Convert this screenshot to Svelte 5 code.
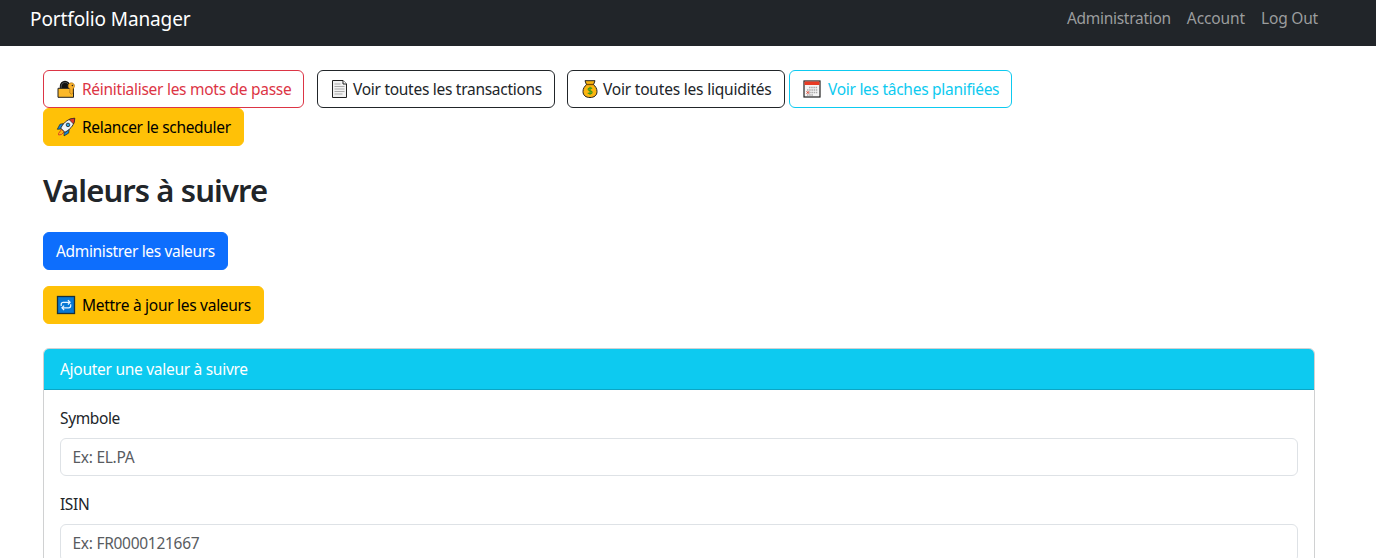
<script>
  const fields = [
    { id: 'symbole', label: 'Symbole', hint: 'Ex: EL.PA' },
    { id: 'isin', label: 'ISIN', hint: 'Ex: FR0000121667' }
  ];
</script>

<nav>
  <a class="brand" href="#home">Portfolio Manager</a>
  <div class="links">
    <a href="#administration">Administration</a>
    <a href="#account" class="account">Account</a>
    <a href="#logout" class="logout">Log Out</a>
  </div>
</nav>

<main>
  <div class="actions">
    <button class="btn danger w1">
      <svg viewBox="0 0 20 20">
        <path d="M3.800 10V7a5.200 5.200 0 0 1 10.400 0v3z" fill="#111" />
        <path d="M5.200 9V7a3.800 3.800 0 0 1 7.200-1.500" fill="none" stroke="#5a5f63" stroke-width=".8" />
        <path d="M2 9.300h15.500v9H2z" fill="#fbb829" stroke="#222" />
        <path d="M13.800 9.800a3.200 3.200 0 1 1 3.200-.1v4.200l-1.600 1.300-1.600-1.300z" fill="#f8b02c" stroke="#9b6815" stroke-width=".6" />
        <circle cx="16.400" cy="6.500" r=".8" fill="#222" />
      </svg><span>Réinitialiser les mots de passe</span>
    </button>
    <button class="btn dark w2">
      <svg viewBox="0 0 20 20">
        <path d="M2.500 1.500h10.500l3.500 3.500v13.500h-14z" fill="#f2f2f2" stroke="#222" />
        <path d="M13 1.500V5h3.500" fill="#fff" stroke="#222" />
        <path d="M4.500 5h6M4.500 7.500h10M4.500 10h10M4.500 12.500h10M4.500 15h8" stroke="#aaa" stroke-width="1" />
      </svg><span>Voir toutes les transactions</span>
    </button>
    <button class="btn dark w3">
      <svg viewBox="0 0 20 20">
        <path d="M6.700 5.500h6.600c2.400 2 3.700 4.200 3.700 7 0 4-3 6-7 6s-7-2-7-6c0-2.800 1.300-5 3.700-7z" fill="#fbb510" stroke="#222" />
        <path d="M5 1.700h10l-1.400 3.800H6.400z" fill="#fbb510" stroke="#222" />
        <path d="M6.500 5.500h7" stroke="#7a4b08" stroke-width="1.300" />
        <path d="M12 9.600c-.6-.8-3.900-1.100-3.900.7 0 1.900 4 1 4 3 0 1.800-3.400 1.600-4.300.5M10 7.800v8" fill="none" stroke="#3c9b17" stroke-width="1.200" />
      </svg><span>Voir toutes les liquidités</span>
    </button>
    <button class="btn info w4">
      <svg viewBox="0 0 20 20">
        <rect x="2" y="2" width="16" height="16" fill="#f5f5f5" stroke="#222" stroke-width="1.200" />
        <path d="M2.500 2.500h15V6h-15z" fill="#e83b24" />
        <path d="M7 8.500h8.500M5 11h10.500M5 13.500h10.500M5 16h6" stroke="#aaa" stroke-width="1.400" stroke-dasharray="1.500 .7" />
        <path d="M4.500 12.200l2.600 2.600M7.100 12.200l-2.600 2.600" stroke="#e83b24" stroke-width=".9" />
      </svg><span>Voir les tâches planifiées</span>
    </button>
    <button class="btn warning w5">
      <svg viewBox="0 0 20 20">
        <path d="M5.500 12.500L2.500 16.500l.2 1.500 2.800-.5 3-3z" fill="#fbb510" stroke="#d83820" stroke-width=".9" />
        <path d="M7.600 6.500L4 7.200 1.300 12.300l4-.4zM13.200 12.300l-.5 3.800-4.700 2.800.2-4z" fill="#1689d8" stroke="#222" stroke-width=".7" />
        <path d="M18.700 1.300c-5.600.2-10.400 3-14 9.800l4.200 4.200C15.800 11.500 18.500 6.900 18.700 1.300z" fill="#edf4f8" stroke="#222" stroke-width=".9" />
        <path d="M18.700 1.300c-2.300 0-4.100.4-5.700 1.200l4.500 4.500c.8-1.600 1.200-3.400 1.200-5.700z" fill="#df3827" stroke="#222" stroke-width=".6" />
        <circle cx="12" cy="7.900" r="1.800" fill="#29a9e8" stroke="#222" stroke-width=".8" />
      </svg><span>Relancer le scheduler</span>
    </button>
  </div>

  <h2>Valeurs à suivre</h2>

  <button class="btn primary w6"><span>Administrer les valeurs</span></button>
  <button class="btn warning update w7">
    <svg viewBox="0 0 20 20">
      <rect x="1.500" y="1.500" width="17" height="17" fill="#0878d4" stroke="#17303c" stroke-width="1.300" />
      <path d="M5.200 11V9.300c0-1.300.7-2 2-2H14M11.900 5.100l2.200 2.200-2.200 2.200M14.700 9.200v1.600c0 1.300-.7 2-2 2H6M8.100 10.600l-2.200 2.200L8.100 15" fill="none" stroke="#eaf6ff" stroke-width="1.200" />
    </svg><span>Mettre à jour les valeurs</span>
  </button>

  <section class="card">
    <header><span>Ajouter une valeur à suivre</span></header>
    <div class="body">
      {#each fields as field}
        <div class="field">
          <label for={field.id}>{field.label}</label>
          <input id={field.id} type="text" placeholder={field.hint} />
        </div>
      {/each}
    </div>
  </section>
</main>

<style>
  :global(body) { margin: 0; background: #fff; }
  :global(#app) { height: 558px; overflow: hidden; font: 15.5px/24px "Noto Sans", "Open Sans", sans-serif; color: #212529; letter-spacing: -0.28px; }
  nav { box-sizing: border-box; height: 46px; background: #212529; padding: 0 58px 9px 30px; display: flex; align-items: center; justify-content: space-between; }
  a { text-decoration: none; color: #9b9d9e; white-space: nowrap; }
  .brand { color: #fff; font-size: 19px; letter-spacing: -0.12px; }
  .links { display: flex; gap: 16px; position: relative; top: -1px; }
  .account { letter-spacing: -0.1px; }
  .logout { letter-spacing: -0.2px; }
  main { padding: 24px 61px 0 43px; }
  .actions { display: flex; flex-wrap: wrap; width: 1100px; }
  .btn { box-sizing: border-box; height: 38px; padding: 0 0 0 12px; border: 1px solid; border-radius: 6px; display: flex; align-items: center; font: inherit; letter-spacing: inherit; background: #fff; white-space: nowrap; }
  .btn svg { width: 20px; height: 20px; margin-right: 6px; flex: none; }
  .danger { color: #dc3545; }
  .dark { color: #212529; }
  .info { color: #0dcaf0; }
  .warning { color: #000; background: #ffc107; border-color: #ffc107; }
  .primary { color: #fff; background: #0d6efd; border-color: #0d6efd; }
  .w1 { width: 261px; margin-right: 13px; }
  .w2 { width: 238px; margin-right: 12px; }
  .w3 { width: 218px; margin-right: 4px; letter-spacing: -0.2px; }
  .w2 svg, .w3 svg { margin-right: 3px; }
  .w4 { width: 223px; margin-right: 100px; }
  .w5 { width: 201px; letter-spacing: -0.32px; }
  .w6 { width: 185px; letter-spacing: -0.34px; }
  .w7 { width: 221px; }
  h2 { margin: 25px 0 23px; font-size: 31px; line-height: 38px; font-weight: 600; letter-spacing: -0.9px; }
  .update { margin: 16px 0 24px; }
  .card { border: 1px solid #d0d1d2; border-radius: 6px; height: 400px; }
  header { height: 40px; line-height: 41px; padding: 0 16px; background: #0dcaf0; color: #fff; border-bottom: 1px solid #0ba6c5; border-radius: 5px 5px 0 0; }
  .body { padding: 16px; }
  .field { margin-bottom: 16px; }
  label { display: block; margin-bottom: 8px; letter-spacing: -0.38px; }
  input { box-sizing: border-box; width: 100%; height: 38px; display: block; border: 1px solid #dee2e6; border-radius: 6px; padding: 0 11.500px; font: inherit; letter-spacing: inherit; }
  input::placeholder { color: #595c5f; opacity: 1; }
</style>
